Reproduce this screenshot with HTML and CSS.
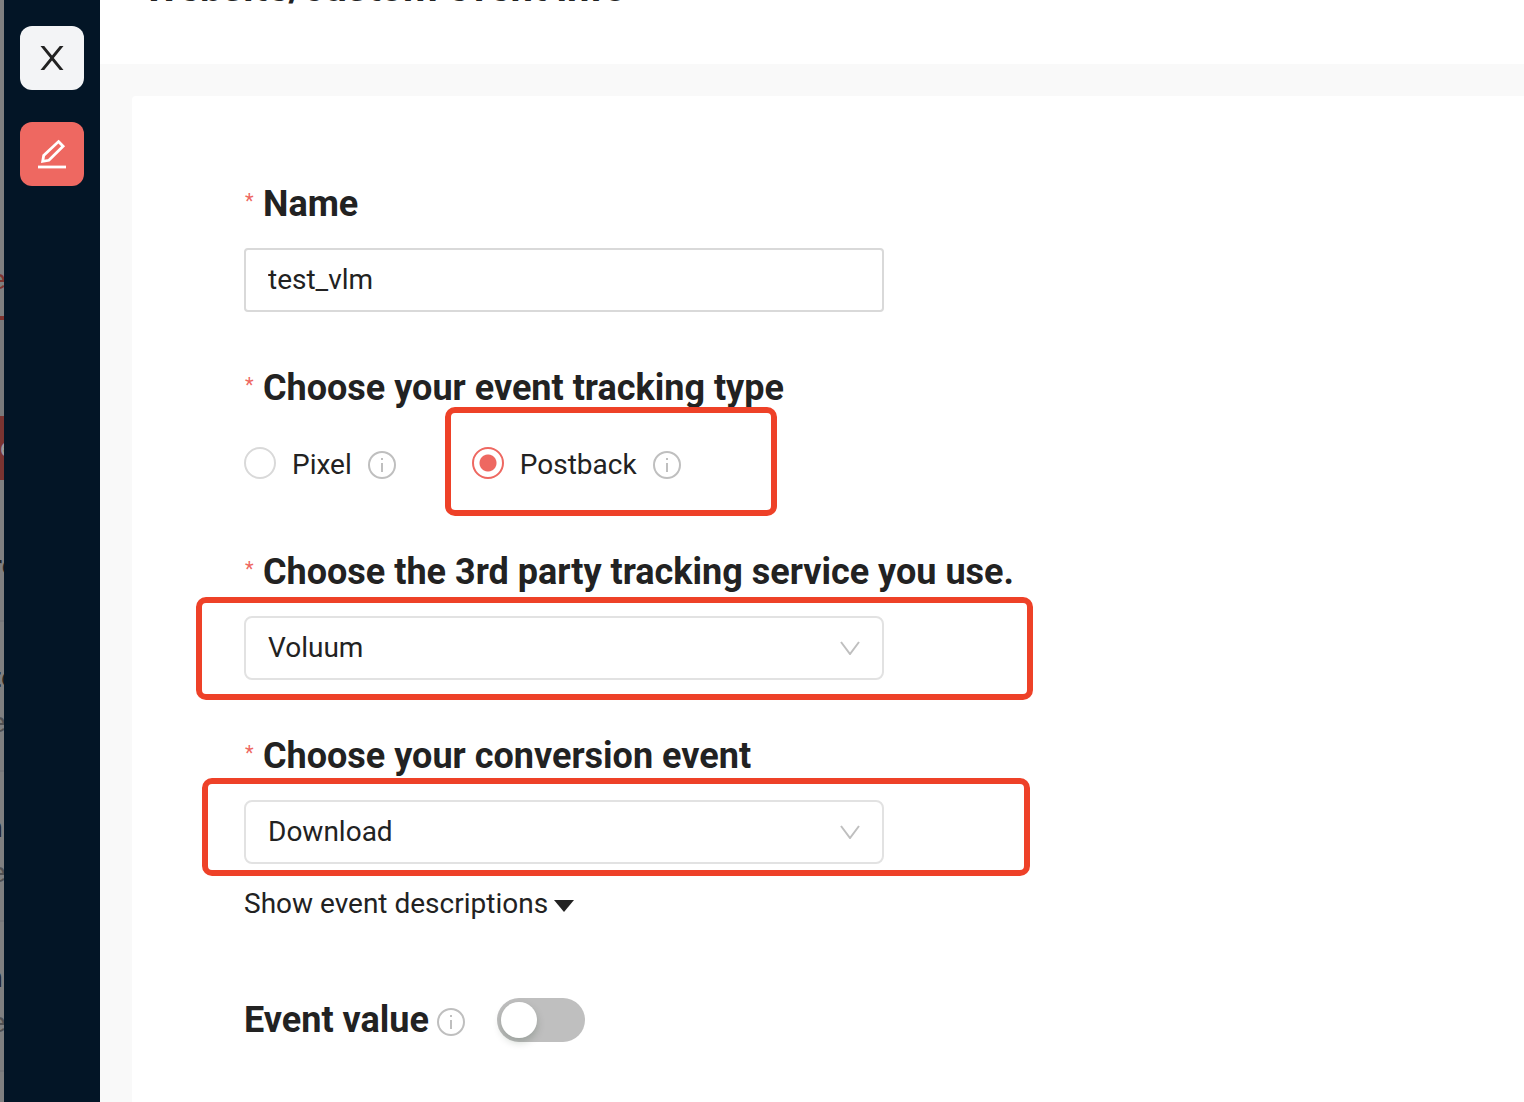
FILE: index.html
```
<!DOCTYPE html>
<html lang="en">
<head>
<meta charset="utf-8">
<title>Edit event</title>
<link rel="stylesheet" href="styles.css">
</head>
<body>
<div class="layout">
  <div class="backdrop" aria-hidden="true">
    <div class="backdrop-top"></div>
    <div class="backdrop-tab"><span>e</span></div>
    <div class="backdrop-toolbar"><div class="backdrop-button"><span>e</span></div></div>
    <div class="backdrop-row backdrop-head"><b>re</b></div>
    <div class="backdrop-row"><b>te</b><span>e</span></div>
    <div class="backdrop-row"><b class="wide">n</b><span>e</span></div>
    <div class="backdrop-row"><b class="wide">n</b><span>e</span></div>
  </div>
  <nav class="rail">
    <button class="rail-button" type="button" aria-label="Close">
      <svg width="32" height="32" viewBox="0 0 32 32"><path d="M4.500 4h3.700L16 13.600 23.800 4h3.700L17.800 16 27.500 28h-3.700L16 18.400 8.200 28H4.500l9.700-12z" fill="#222"/></svg>
    </button>
    <button class="rail-button rail-button-active" type="button" aria-label="Edit">
      <svg width="32" height="32" viewBox="0 0 32 32" fill="none" stroke="#fff" stroke-width="2.800"><path d="M22.500 3.600l4.600 4.600L12.900 22.300l-6.200 1 1-5.800z"/><path d="M2 29h28"/></svg>
    </button>
  </nav>
  <main class="main">
    <header class="header"><h1>Website/custom event info</h1></header>
    <div class="content">
      <form class="card">
        <div class="field">
          <label class="label required" for="name">Name</label>
          <input class="input" id="name" type="text" value="test_vlm">
        </div>
        <div class="field" role="radiogroup" aria-labelledby="type-label">
          <div class="label required" id="type-label">Choose your event tracking type</div>
          <div class="options">
            <div class="option">
              <input type="radio" name="type" id="pixel"><label for="pixel">Pixel</label>
              <svg class="info" viewBox="0 0 28 28"><circle cx="14" cy="14" r="13"/><path d="M14 12v9M14 7v2"/></svg>
            </div>
            <div class="option">
              <input type="radio" name="type" id="postback" checked><label for="postback">Postback</label>
              <svg class="info" viewBox="0 0 28 28"><circle cx="14" cy="14" r="13"/><path d="M14 12v9M14 7v2"/></svg>
              <span class="mark mark-option"></span>
            </div>
          </div>
        </div>
        <div class="field">
          <label class="label required" for="service">Choose the 3rd party tracking service you use.</label>
          <div class="select">
            <select id="service"><option>Voluum</option></select>
            <svg class="chevron" viewBox="0 0 20 14"><path d="M1 1l9 12 9-12"/></svg>
            <span class="mark mark-service"></span>
          </div>
        </div>
        <div class="field">
          <label class="label required" for="event">Choose your conversion event</label>
          <div class="select">
            <select id="event"><option>Download</option></select>
            <svg class="chevron" viewBox="0 0 20 14"><path d="M1 1l9 12 9-12"/></svg>
            <span class="mark mark-event"></span>
          </div>
          <button class="disclosure" type="button">Show event descriptions
            <svg width="20" height="16" viewBox="0 0 20 16"><path d="M0 4h20L10 16z" fill="#222"/></svg>
          </button>
        </div>
        <div class="value-row">
          <label class="label" for="value">Event value</label>
          <svg class="info" viewBox="0 0 28 28"><circle cx="14" cy="14" r="13"/><path d="M14 12v9M14 7v2"/></svg>
          <input class="switch" id="value" type="checkbox" role="switch">
        </div>
      </form>
    </div>
  </main>
</div>
</body>
</html>
```
FILE: styles.css
```
* { box-sizing: border-box; }
body { margin: 0; font: 28px/40px Roboto, sans-serif; color: #222; background: #f9f9f9; }
button, input, select { font: inherit; color: inherit; margin: 0; }
.layout { display: flex; height: 100vh; overflow: hidden; }

.backdrop { flex: 0 0 4px; overflow: hidden; background: #7f7f80; color: #222; }
.backdrop-top { height: 260px; }
.backdrop-tab { height: 60px; border-bottom: 4px solid #80342f; color: #80342f; }
.backdrop-toolbar { height: 160px; padding-top: 96px; background: #79797b; }
.backdrop-button { height: 64px; padding-top: 12px; background: #7a3431; color: #999; }
.backdrop-row { height: 150px; padding-top: 36px; border-bottom: 2px solid #77777a; }
.backdrop-head { height: 142px; padding-top: 66px; }
.backdrop-row b, .backdrop-row span { display: block; height: 45px; font-weight: 500; margin-left: -8px; }
.backdrop-row .wide { margin-left: -13px; }
.backdrop-row span, .backdrop-tab span, .backdrop-button span { font-weight: 400; display: block; margin-left: -9px; }
.backdrop-button span { margin-left: 0; }
.backdrop-row span { color: #505052; }

.rail { flex: 0 0 96px; display: flex; flex-direction: column; align-items: center; gap: 32px; padding-top: 26px; background: #031526; }
.rail-button { width: 64px; height: 64px; display: flex; align-items: center; justify-content: center; padding: 0; border: 0; border-radius: 12px; background: #f3f4f6; }
.rail-button-active { background: #ee6861; }

.main { flex: 1; min-width: 0; display: flex; flex-direction: column; }
.header { height: 64px; flex: none; overflow: hidden; background: #fff; padding-left: 44px; }
.header h1 { margin: -32px 0 0; font-size: 40px; line-height: 40px; font-weight: 700; }
.content { flex: 1; display: flex; padding: 32px 0 0 32px; background: #f9f9f9; }
.card { flex: 1; min-width: 0; padding: 80px 112px; background: #fff; border-radius: 4px 0 0 0; }

.field { margin-bottom: 48px; }
.label { display: block; font-size: 36px; line-height: 56px; font-weight: 700; margin-bottom: 16px; }
.required::before { content: "*"; display: inline-block; width: 18px; padding-left: 1px; font-size: 20px; line-height: 20px; font-weight: 400; color: #ee6861; vertical-align: 8px; }
.input, .select { display: block; width: 640px; max-width: 100%; height: 64px; }
.input { padding: 0 22px 2px; border: 2px solid #d9d9d9; border-radius: 4px; background: #fff; }
.select { position: relative; }
.select select { appearance: none; width: 100%; height: 64px; padding: 0 22px; border: 2px solid #e2e2e2; border-radius: 8px; background: #fff; }
.chevron { position: absolute; right: 24px; top: 25px; width: 20px; height: 14px; fill: none; stroke: #bfbfbf; stroke-width: 2; pointer-events: none; }

.options { display: flex; gap: 76px; height: 64px; }
.option { position: relative; display: flex; align-items: center; padding-top: 2px; }
.option input { appearance: none; width: 32px; height: 32px; margin-bottom: 4px; border: 2px solid #d9d9d9; border-radius: 50%; background: #fff; }
.option input:checked { border-color: #ee6861; background: radial-gradient(circle, #ee6861 8px, #fff 9px); }
.option label { margin: 0 16px; }
.info { width: 28px; height: 28px; fill: none; stroke: #bfbfbf; stroke-width: 2; }

.mark { position: absolute; border: 6px solid #ee4128; border-radius: 10px; pointer-events: none; }
.mark-option { left: -27px; top: -25px; width: 332px; height: 109px; }
.mark-service { left: -48px; top: -19px; width: 837px; height: 103px; }
.mark-event { left: -42px; top: -22px; width: 828px; height: 98px; }

.disclosure { display: flex; align-items: center; gap: 6px; margin-top: 20px; padding: 0; border: 0; background: none; }
.value-row { display: flex; align-items: center; gap: 8px; padding-top: 20px; }
.value-row .label { margin: 0; }
.value-row .info { margin-top: 4px; }
.switch { appearance: none; width: 88px; height: 44px; margin-left: 24px; padding: 4px; border-radius: 22px; background: #bfbfbf; }
.switch::before { content: ""; display: block; width: 36px; height: 36px; border-radius: 50%; background: #fff; box-shadow: 0 4px 8px rgba(0, 35, 11, .2); }
```
